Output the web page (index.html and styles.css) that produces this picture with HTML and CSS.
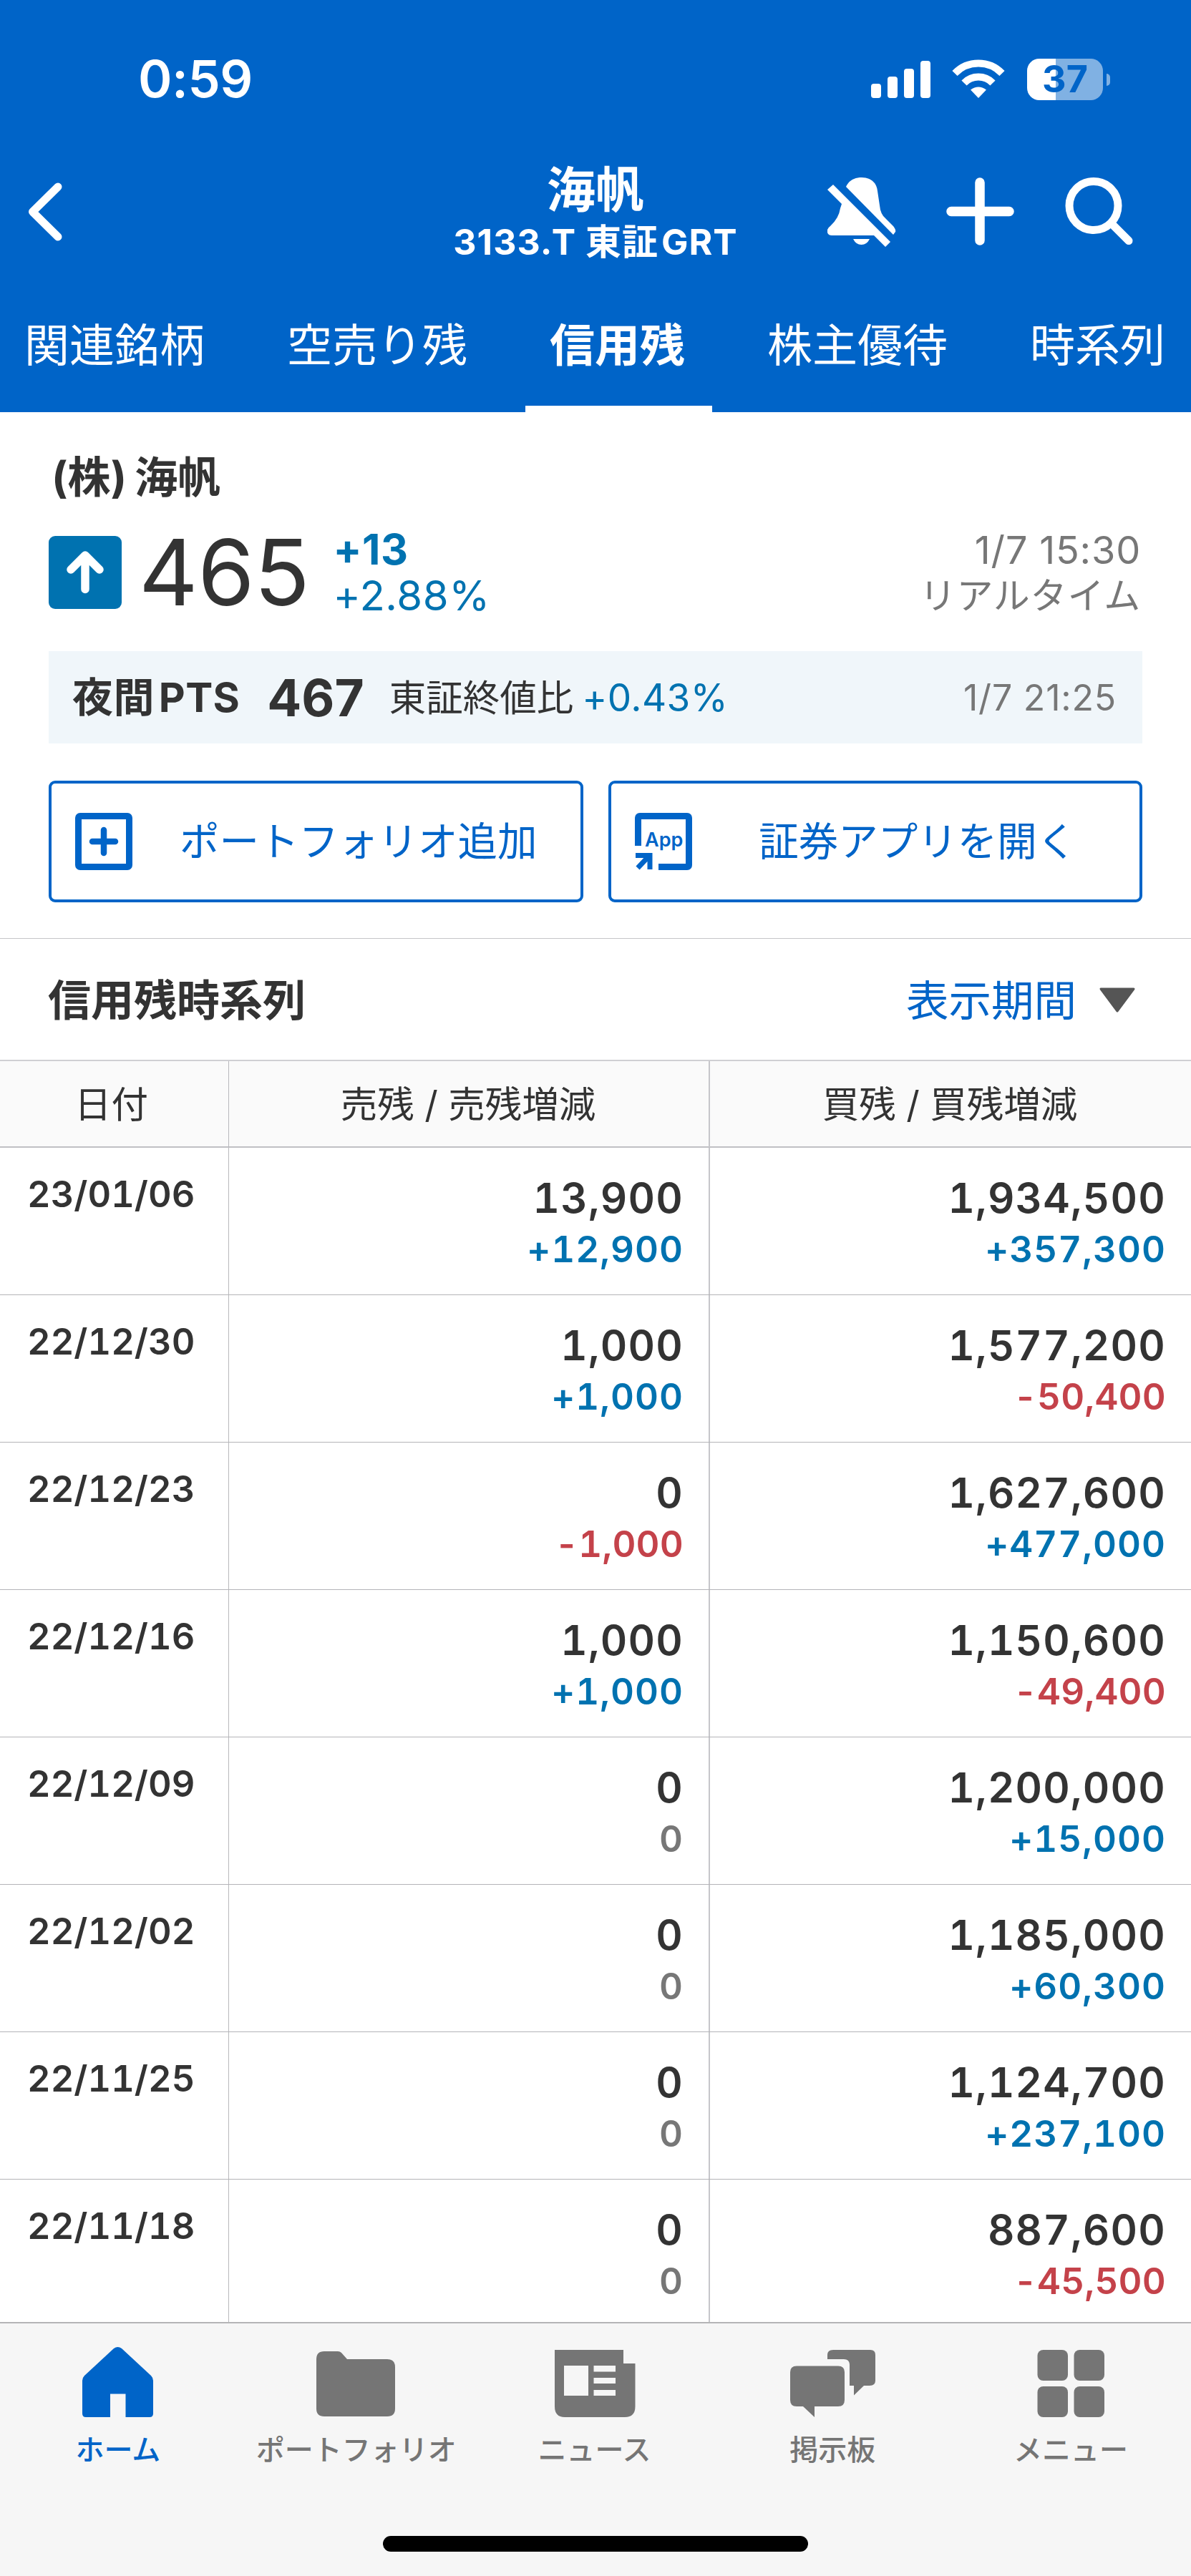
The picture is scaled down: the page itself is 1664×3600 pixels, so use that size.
FILE: index.html
```html
<!DOCTYPE html>
<html lang="ja">
<head>
    <meta charset="UTF-8">
    <meta name="viewport" content="width=device-width, initial-scale=1.0">
    <title>海帆 信用残</title>
    <link rel="stylesheet" href="styles.css">
</head>
<body>

    <header class="header">
        <div class="status">
            <span class="clock">0:59</span>
            <div class="status-icons">
                <svg class="signal" width="84" height="54" viewBox="0 0 84 54" fill="#fff">
                    <rect x="0" y="33" width="14" height="20" rx="4"/>
                    <rect x="23" y="23" width="14" height="30" rx="4"/>
                    <rect x="46" y="12" width="14" height="41" rx="4"/>
                    <rect x="69" y="1" width="14" height="52" rx="4"/>
                </svg>
                <svg class="wifi" width="74" height="54" viewBox="0 0 74 54">
                    <g fill="none" stroke="#fff" stroke-width="10">
                        <path d="M4 18.500 A46 46 0 0 1 70 18.500"/>
                        <path d="M17 32 A28 28 0 0 1 57 32"/>
                    </g>
                    <path d="M26 41.500 Q37 33.500 48 41.500 L37 53 Z" fill="#fff"/>
                </svg>
                <div class="battery">37</div>
                <span class="battery-cap"></span>
            </div>
        </div>

        <div class="nav">
            <svg class="back" width="60" height="100" viewBox="0 0 60 100" fill="none" stroke="#fff" stroke-width="11" stroke-linecap="round" stroke-linejoin="round">
                <path d="M44 15 L8.500 50 L44 85"/>
            </svg>
            <div class="nav-title">
                <h1>海帆</h1>
                <p>3133.T 東証<i>GRT</i></p>
            </div>
            <div class="nav-icons">
                <svg width="110" height="110" viewBox="0 0 110 110" fill="#fff">
                    <path d="M6 24 L14 17 L94 97 L87 104 L71 88 H12 Q5 88 6 80 Q7 77 10 75 Q22 64 24 50 L26 44 Z"/>
                    <path d="M32 20 C36 11 44 7 54 7 C66 7 75 14 76 26 L79 46 Q80 58 87 64 L98 75 Q102 80 101 83 L98 87 Z"/>
                    <path d="M42 93 H65 Q61 101 53.500 101 Q46 101 42 93 Z"/>
                </svg>
                <svg width="110" height="110" viewBox="0 0 110 110" stroke="#fff" stroke-width="13.500" stroke-linecap="round">
                    <path d="M55 14 V95 M15 54.500 H96"/>
                </svg>
                <svg width="110" height="110" viewBox="0 0 110 110" fill="none" stroke="#fff" stroke-width="11" stroke-linecap="round">
                    <circle cx="50" cy="46.500" r="34"/>
                    <path d="M75 71.500 L99 95.500"/>
                </svg>
            </div>
        </div>

        <div class="tabs">
            <span class="tab">関連銘柄</span>
            <span class="tab">空売り残</span>
            <span class="tab active">信用残</span>
            <span class="tab">株主優待</span>
            <span class="tab">時系列</span>
        </div>
    </header>

    <section class="stock">
        <h2>(株)<span>海帆</span></h2>
        <div class="price-row">
            <svg class="arrow" width="102" height="102" viewBox="0 0 102 102">
                <rect width="102" height="102" rx="9" fill="#0072b0"/>
                <path d="M51 74.500 V28 M31 47 L51 27 L71 47" fill="none" stroke="#fff" stroke-width="11.500" stroke-linecap="round" stroke-linejoin="round"/>
            </svg>
            <span class="price">465</span>
            <div class="change">
                <b>+13</b>
                <span>+2.88%</span>
            </div>
            <div class="time">
                <span>1/7 15:30</span>
                <span class="realtime">リアルタイム</span>
            </div>
        </div>
        <div class="pts">
            <span class="pts-label">夜間<i>PTS</i></span>
            <span class="pts-price">467</span>
            <span class="pts-diff">東証終値比</span>
            <span class="pts-rate">+0.43%</span>
            <span class="pts-time">1/7 21:25</span>
        </div>
        <div class="buttons">
            <div class="btn">
                <svg width="80" height="80" viewBox="0 0 80 80" fill="none" stroke="#0064c8">
                    <rect x="4.500" y="4.500" width="71" height="71" rx="2.500" stroke-width="9"/>
                    <path d="M40 24 V56 M24 40 H56" stroke-width="8.500" stroke-linecap="round"/>
                </svg>
                <span>ポートフォリオ追加</span>
            </div>
            <div class="btn">
                <svg width="80" height="80" viewBox="0 0 80 80" fill="none" stroke="#0064c8" stroke-width="9">
                    <path d="M4.500 46 V7 Q4.500 4.500 7 4.500 H73 Q75.500 4.500 75.500 7 V73 Q75.500 75.500 73 75.500 H33"/>
                    <path d="M1 59.500 H21 V79 M20 60 L4 77" stroke-width="7"/>
                    <text class="app-text" x="14" y="47">App</text>
                </svg>
                <span>証券アプリを開く</span>
            </div>
        </div>
    </section>

    <section class="history">
        <div class="history-head">
            <h2>信用残時系列</h2>
            <span class="period">表示期間</span>
            <svg width="52" height="36" viewBox="0 0 52 36">
                <path d="M3 2 H49 L26 33 Z" fill="#555" stroke="#555" stroke-width="3" stroke-linejoin="round"/>
            </svg>
        </div>
        <div class="row row-head">
            <div>日付</div>
            <div>売残 / 売残増減</div>
            <div>買残 / 買残増減</div>
        </div>
        <div class="row">
            <div class="date">23/01/06</div>
            <div class="num">13,900<small class="up">+12,900</small></div>
            <div class="num">1,934,500<small class="up">+357,300</small></div>
        </div>
        <div class="row">
            <div class="date">22/12/30</div>
            <div class="num">1,000<small class="up">+1,000</small></div>
            <div class="num">1,577,200<small class="down">-50,400</small></div>
        </div>
        <div class="row">
            <div class="date">22/12/23</div>
            <div class="num">0<small class="down">-1,000</small></div>
            <div class="num">1,627,600<small class="up">+477,000</small></div>
        </div>
        <div class="row">
            <div class="date">22/12/16</div>
            <div class="num">1,000<small class="up">+1,000</small></div>
            <div class="num">1,150,600<small class="down">-49,400</small></div>
        </div>
        <div class="row">
            <div class="date">22/12/09</div>
            <div class="num">0<small>0</small></div>
            <div class="num">1,200,000<small class="up">+15,000</small></div>
        </div>
        <div class="row">
            <div class="date">22/12/02</div>
            <div class="num">0<small>0</small></div>
            <div class="num">1,185,000<small class="up">+60,300</small></div>
        </div>
        <div class="row">
            <div class="date">22/11/25</div>
            <div class="num">0<small>0</small></div>
            <div class="num">1,124,700<small class="up">+237,100</small></div>
        </div>
        <div class="row last">
            <div class="date">22/11/18</div>
            <div class="num">0<small>0</small></div>
            <div class="num">887,600<small class="down">-45,500</small></div>
        </div>
    </section>

    <footer class="footer">
        <div class="menu">
            <div class="menu-item current">
                <svg width="120" height="100" viewBox="0 0 120 100" fill="currentColor">
                    <path d="M9 48 Q9 44 12 41 L53 3 Q58.500 -1 64 3 L105 41 Q108 44 108 48 V94 Q108 99 103 99 H69.500 V66.500 H48 V99 H14 Q9 99 9 94 Z"/>
                </svg>
                <span>ホーム</span>
            </div>
            <div class="menu-item">
                <svg width="120" height="100" viewBox="0 0 120 100" fill="currentColor">
                    <path d="M14 7 H33 Q36 7 38 9 L46 18 H102 Q113 18 113 29 V87 Q113 98 102 98 H14 Q3 98 3 87 V18 Q3 7 14 7 Z"/>
                </svg>
                <span>ポートフォリオ</span>
            </div>
            <div class="menu-item">
                <svg width="120" height="100" viewBox="0 0 120 100" fill="currentColor">
                    <path d="M3 5 H99 V24 H115.500 V84 Q115.500 99 101 99 H17 Q3 99 3 84 Z"/>
                    <path d="M16 27 H50 V69 H16 Z M57.500 27 H88 V35.500 H57.500 Z M57.500 44 H88 V52 H57.500 Z M57.500 61 H88 V69 H57.500 Z" fill="#f6f6f6"/>
                </svg>
                <span>ニュース</span>
            </div>
            <div class="menu-item">
                <svg width="120" height="100" viewBox="0 0 120 100" fill="currentColor">
                    <path d="M8 27.500 H66 Q75 27.500 75 36 V75 Q75 84 66 84 H33 V99 L17 84 H8 Q-1 84 -1 75 V36 Q-1 27.500 8 27.500 Z"/>
                    <path d="M51 18 V12 Q51 5 59 5 H111 Q118 5 118 12 V48 Q118 55 110 55 H102 L88 68.500 V55 H82 V26 Q82 18 74 18 Z"/>
                </svg>
                <span>掲示板</span>
            </div>
            <div class="menu-item">
                <svg width="120" height="100" viewBox="0 0 120 100" fill="currentColor">
                    <rect x="11.500" y="5" width="42.500" height="43" rx="8"/>
                    <rect x="62.500" y="5" width="42.500" height="43" rx="8"/>
                    <rect x="11.500" y="56" width="42.500" height="43" rx="8"/>
                    <rect x="62.500" y="56" width="42.500" height="43" rx="8"/>
                </svg>
                <span>メニュー</span>
            </div>
        </div>
        <div class="home-bar"></div>
    </footer>

</body>
</html>
```
FILE: styles.css
```css
* { margin: 0; padding: 0; box-sizing: border-box; }
body { width: 1664px; height: 3600px; overflow: hidden; background: #fff; color: #333; font-family: Inter, "Noto Sans CJK JP", sans-serif; display: flex; flex-direction: column; }
svg { display: block; flex: none; overflow: visible; }
span { white-space: nowrap; }
i { font-style: normal; }

/* header */
.header { height: 576px; background: #0064c8; color: #fff; }
.status { height: 222px; padding: 0 113px 0 193px; display: flex; align-items: center; justify-content: space-between; }
.clock { font-size: 72px; font-weight: 600; letter-spacing: -0.5px; line-height: 80px; padding-bottom: 2px; }
.status-icons { display: flex; align-items: center; }
.signal { margin-right: 29px; }
.wifi { margin-right: 31px; }
.battery { width: 106px; height: 58px; border-radius: 17px; background: linear-gradient(to right, #fff 40px, #80b1e3 40px); color: #0064c8; font-size: 52px; font-weight: 700; line-height: 58px; text-align: center; }
.battery-cap { width: 5px; height: 17px; margin-left: 5px; border-radius: 0 5px 5px 0; background: #80b1e3; }
.nav { height: 144px; padding: 0 76px; display: grid; grid-template-columns: 1fr 400px 1fr; align-items: center; }
.back { margin-left: -39px; }
.nav-title { align-self: start; text-align: center; white-space: nowrap; }
.nav-title h1 { font-size: 68px; line-height: 86px; font-weight: 600; }
.nav-title p { font-size: 50px; line-height: 61px; font-weight: 700; letter-spacing: 1px; }
.nav-title i { margin-left: 4px; }
.nav-icons { display: flex; gap: 54px; justify-content: flex-end; }
.tabs { height: 210px; display: flex; gap: 43px; }
.tab { padding: 76px 38px 0 34px; font-size: 63px; line-height: 80px; }
.active { font-weight: 700; border-bottom: 9px solid #fff; }

/* stock */
.stock { height: 736px; padding: 49px 68px 0; border-bottom: 1px solid #c6c6c8; }
h2 { font-size: 60px; line-height: 84px; font-weight: 700; }
.stock h2 { padding-left: 4px; }
.stock h2 span { margin-left: 11px; }
.price-row { height: 150px; margin-top: 16px; display: flex; align-items: center; }
.price { margin-left: 24px; font-size: 128px; line-height: 150px; letter-spacing: -0.5px; }
.change { margin-left: 33px; display: flex; flex-direction: column; color: #0072b0; font-size: 58px; line-height: 64px; letter-spacing: 0.6px; }
.change b { font-size: 59px; }
.time { margin-left: auto; padding: 2px 2px 0 0; display: flex; flex-direction: column; color: #777; font-size: 54px; line-height: 64px; letter-spacing: 0.8px; text-align: right; }
.realtime { font-size: 51px; }
.pts { height: 129px; margin-top: 35px; padding: 0 36px; background: #f0f6fa; display: flex; align-items: center; line-height: 80px; }
.pts-label { margin-left: -3px; font-size: 57px; font-weight: 700; letter-spacing: 0.4px; }
.pts-label i { margin-left: 6px; }
.pts-price { margin-left: 38px; font-size: 71px; font-weight: 700; }
.pts-diff { margin-left: 35px; font-size: 51.5px; }
.pts-rate { margin-left: 12px; font-size: 53px; letter-spacing: 0.4px; color: #0072b0; }
.pts-time { margin-left: auto; font-size: 50px; letter-spacing: 0.8px; color: #777; }
.buttons { margin-top: 52px; display: flex; gap: 35px; }
.btn { flex: 1; height: 170px; padding: 0 33px; border: 4px solid #0064c8; border-radius: 9px; display: flex; align-items: center; color: #0064c8; font-size: 55.5px; line-height: 80px; }
.btn span { flex: 1; padding-left: 39px; text-align: center; }
.app-text { font-size: 27px; font-weight: 600; fill: #0064c8; stroke: none; }

/* history */
.history { height: 1933px; overflow: hidden; }
.history-head { height: 169px; padding: 2px 77px 0 67px; display: flex; align-items: center; }
.period { margin-left: auto; margin-right: 31px; font-size: 59.5px; line-height: 84px; color: #0064c8; }
.row { height: 206px; display: grid; grid-template-columns: 320px 672px 672px; border-bottom: 1px solid #b4b4b8; }
.row > div { border-right: 2px solid #c6c6ca; }
.row > div:first-child { border-right: 1px solid #b8b8bc; }
.row > div:last-child { border-right: none; }
.row-head { height: 123px; border-top: 2px solid #cfcfd3; border-bottom: 2px solid #c0c0c4; background: #fafafa; font-size: 51.5px; line-height: 120px; text-align: center; }
.row-head div:first-child { padding-right: 8px; }
.row-head div { padding-right: 2px; }
.date, .num { font-weight: 600; font-variant-numeric: tabular-nums; }
.date { padding: 35px 0 0 38px; font-size: 50.5px; line-height: 60px; }
.num { padding: 35px 35px 0 0; font-size: 58px; line-height: 70px; letter-spacing: 1.2px; text-align: right; }
.num small { display: block; padding-top: 2px; font-size: 51px; letter-spacing: 1px; color: #777; }
.num .up { color: #0072b0; }
.num .down { color: #c4424a; letter-spacing: 0.2px; }

/* footer */
.footer { height: 355px; border-top: 2px solid #b4b4b6; background: #f6f6f6; }
.menu { height: 298px; padding-top: 32px; display: grid; grid-template-columns: repeat(5, 1fr); }
.menu-item { display: flex; flex-direction: column; align-items: center; color: #757575; font-size: 40px; line-height: 60px; font-weight: 500; }
.menu-item span { margin-top: 15px; padding-right: 3px; }
.current { color: #0064c8; }
.home-bar { width: 594px; height: 22px; margin: -1px auto 0; border-radius: 11px; background: #000; }
```
